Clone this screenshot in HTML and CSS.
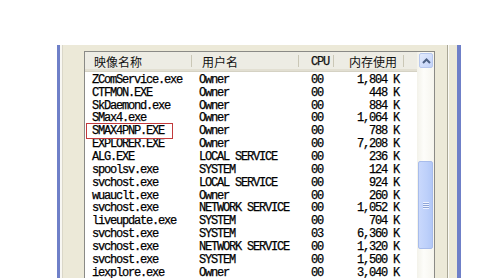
FILE: index.html
```html
<!DOCTYPE html>
<html>
<head>
<meta charset="utf-8">
<link rel="stylesheet" href="styles.css">
</head>
<body>
<div class="stage">
  <div class="window">
    <div class="gutter-l"></div>
    <div class="listbox">
      <div class="list">
        <div class="header">
          <div class="hc c1">映像名称</div>
          <div class="hc c2">用户名</div>
          <div class="hc c3 mono">CPU</div>
          <div class="hc c4">内存使用</div>
          <div class="hc c5"></div>
        </div>
        <div class="rows">
          <div class="row"><span class="c1">ZComService.exe</span><span class="c2">Owner</span><span class="c3">00</span><span class="c4">1,804 K</span></div>
          <div class="row"><span class="c1">CTFMON.EXE</span><span class="c2">Owner</span><span class="c3">00</span><span class="c4">448 K</span></div>
          <div class="row"><span class="c1">SkDaemond.exe</span><span class="c2">Owner</span><span class="c3">00</span><span class="c4">884 K</span></div>
          <div class="row"><span class="c1">SMax4.exe</span><span class="c2">Owner</span><span class="c3">00</span><span class="c4">1,064 K</span></div>
          <div class="row"><span class="c1">SMAX4PNP.EXE</span><span class="c2">Owner</span><span class="c3">00</span><span class="c4">788 K</span></div>
          <div class="row"><span class="c1">EXPLORER.EXE</span><span class="c2">Owner</span><span class="c3">00</span><span class="c4">7,208 K</span></div>
          <div class="row"><span class="c1">ALG.EXE</span><span class="c2">LOCAL SERVICE</span><span class="c3">00</span><span class="c4">236 K</span></div>
          <div class="row"><span class="c1">spoolsv.exe</span><span class="c2">SYSTEM</span><span class="c3">00</span><span class="c4">124 K</span></div>
          <div class="row"><span class="c1">svchost.exe</span><span class="c2">LOCAL SERVICE</span><span class="c3">00</span><span class="c4">924 K</span></div>
          <div class="row"><span class="c1">wuauclt.exe</span><span class="c2">Owner</span><span class="c3">00</span><span class="c4">260 K</span></div>
          <div class="row"><span class="c1">svchost.exe</span><span class="c2">NETWORK SERVICE</span><span class="c3">00</span><span class="c4">1,052 K</span></div>
          <div class="row"><span class="c1">liveupdate.exe</span><span class="c2">SYSTEM</span><span class="c3">00</span><span class="c4">704 K</span></div>
          <div class="row"><span class="c1">svchost.exe</span><span class="c2">SYSTEM</span><span class="c3">03</span><span class="c4">6,360 K</span></div>
          <div class="row"><span class="c1">svchost.exe</span><span class="c2">NETWORK SERVICE</span><span class="c3">00</span><span class="c4">1,320 K</span></div>
          <div class="row"><span class="c1">svchost.exe</span><span class="c2">SYSTEM</span><span class="c3">00</span><span class="c4">1,500 K</span></div>
          <div class="row"><span class="c1">iexplore.exe</span><span class="c2">Owner</span><span class="c3">00</span><span class="c4">3,040 K</span></div>
        </div>
      </div>
      <div class="scrollbar">
        <div class="sb-btn">
          <svg width="9" height="6" viewBox="0 0 9 6"><path d="M1 5 L4.5 1.5 L8 5" fill="none" stroke="#4D6185" stroke-width="2"/></svg>
        </div>
        <div class="sb-thumb"><div class="grip"></div></div>
      </div>
      <div class="highlight"></div>
    </div>
    <div class="gutter-r"></div>
  </div>
</div>
</body>
</html>
```
FILE: styles.css
```css
html, body {
  margin: 0;
  background: #fff;
}
body {
  width: 494px;
  height: 278px;
  overflow: hidden;
}
.stage {
  padding: 45px 0 0 57px;
}
.window {
  width: 404px;
  height: 233px;
  box-sizing: border-box;
  display: flex;
  background: #ECE9D8;
  border-left: 3px solid #6F80C8;
  border-right: 4px solid #6F80C8;
  overflow: hidden;
}
.gutter-l {
  width: 24px;
  flex: none;
  box-sizing: border-box;
  border-left: 2px solid #F8F7F2;
  box-shadow: inset 1px 0 0 #DAD7C8;
}
.gutter-r {
  width: 22px;
  flex: none;
  box-sizing: border-box;
  padding-right: 8px;
}
.gutter-r::before {
  content: "";
  display: block;
  margin-left: 12px;
  height: 100%;
  border-left: 1px solid #A9A695;
  border-right: 1px solid #FBFAF5;
}
.listbox {
  position: relative;
  margin-top: 6px;
  width: 351px;
  flex: none;
  box-sizing: border-box;
  border: 1px solid #8A8A86;
  border-bottom: none;
  background: #fff;
  display: flex;
}
.list {
  width: 332px;
  flex: none;
}
.header {
  display: flex;
  height: 20px;
  box-sizing: border-box;
  background: #EDECE4;
  border-bottom: 1px solid #D5D2C4;
  box-shadow: inset 0 -2px 0 #E2DFD2;
  font-family: "Noto Sans CJK SC", sans-serif;
  font-size: 12px;
  line-height: 19px;
  color: #111;
}
.hc {
  box-sizing: border-box;
  white-space: nowrap;
  position: relative;
}
.hc::after {
  content: "";
  position: absolute;
  right: 0;
  top: 3px;
  bottom: 4px;
  border-right: 1px solid #CAC7B6;
}
.hc.c5::after { display: none; }
.header .mono {
  font-family: "Liberation Mono", "Courier New", monospace;
  font-size: 12px;
  letter-spacing: -1.2px;
  line-height: 21px;
  -webkit-text-stroke: 0.25px #111;
}
.header .c1 { width: 107px; padding-left: 9px; }
.header .c2 { width: 107px; padding-left: 10px; }
.header .c3 { width: 35px; padding-left: 12px; }
.header .c4 { width: 70px; padding-right: 7px; text-align: right; }
.header .c5 { width: 13px; }
.rows {
  padding-top: 1.8px;
  font-family: "Liberation Mono", "Courier New", monospace;
  font-size: 12px;
  letter-spacing: -1.2px;
  color: #000;
  -webkit-text-stroke: 0.25px #000;
}
.row {
  display: flex;
  height: 12.87px;
  line-height: 12.87px;
  white-space: nowrap;
}
.row span { box-sizing: border-box; display: block; }
.row .c1 { width: 107px; padding-left: 7px; }
.row .c2 { width: 107px; padding-left: 7px; }
.row .c3 { width: 35px; padding-left: 12px; }
.row .c4 { width: 70px; padding-right: 5px; text-align: right; }
.scrollbar {
  width: 17px;
  flex: none;
  background: linear-gradient(to right, #F3F2EA, #FDFDFA 40%, #F6F5EE);
  box-sizing: border-box;
  padding: 1px 1px 0 1px;
}
.sb-btn {
  height: 15px;
  box-sizing: border-box;
  margin: 0 0 0 1px;
  border: 1px solid #B7C8EE;
  border-radius: 2px;
  background: linear-gradient(to bottom right, #E3EBFD, #C3D3F9);
  display: flex;
  align-items: center;
  justify-content: center;
}
.sb-thumb {
  margin-top: 93px;
  height: 88px;
  box-sizing: border-box;
  border: 1px solid #A8BCEB;
  border-radius: 2px;
  background: linear-gradient(to right, #C9D8FC, #BDD0FA 60%, #B3C8F7);
  display: flex;
  align-items: center;
  justify-content: center;
}
.grip {
  width: 6px;
  height: 7px;
  background: repeating-linear-gradient(to bottom, #EEF3FF 0 1px, #8EA5D8 1px 2px);
}
.highlight {
  position: absolute;
  left: 1px;
  top: 71px;
  width: 87px;
  height: 16px;
  box-sizing: border-box;
  border: 1px solid #C23A3C;
}
```
